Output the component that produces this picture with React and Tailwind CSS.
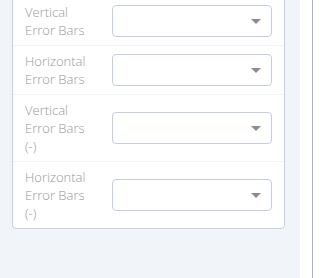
import React from "react";

const rows = [
  ["Vertical", "Error Bars"],
  ["Horizontal", "Error Bars"],
  ["Vertical", "Error Bars", "(-)"],
  ["Horizontal", "Error Bars", "(-)"],
];

function Select() {
  return (
    <div className="flex-1 h-[32px] rounded-[4px] border border-[#c5cde0] bg-white flex items-center justify-end pr-[10px]">
      <svg width="10" height="5" viewBox="0 0 10 5">
        <path d="M0 0 L10 0 L5 5 Z" fill="#8c8c8c" />
      </svg>
    </div>
  );
}

export default function App() {
  return (
    <div
      className="w-[328px] h-[278px] flex overflow-hidden bg-white"
      style={{ fontFamily: '"Open Sans", "Liberation Sans", sans-serif' }}
    >
      <div className="w-[300px] h-full bg-[#f1f4f9] pl-[12px] pr-[15px]">
        <div className="-mt-[4px] bg-white border border-[#c8cfe0] rounded-[4px]">
          {rows.map((lines, i) => (
            <div
              key={i}
              className={
                "flex items-center pl-[12px] pr-[12px] py-[6px] " +
                (i < rows.length - 1 ? "border-b border-[#f3f4f6]" : "")
              }
            >
              <div className="w-[87px] text-[13px] leading-[18px] font-light text-[#999999]">
                {lines.map((l, j) => (
                  <div key={j}>{l}</div>
                ))}
              </div>
              <Select />
            </div>
          ))}
        </div>
      </div>
      <div className="w-[12px] h-full bg-white" />
      <div className="w-[1px] h-full bg-[#a9b4d0]" />
      <div className="flex-1 h-full bg-white" />
    </div>
  );
}
